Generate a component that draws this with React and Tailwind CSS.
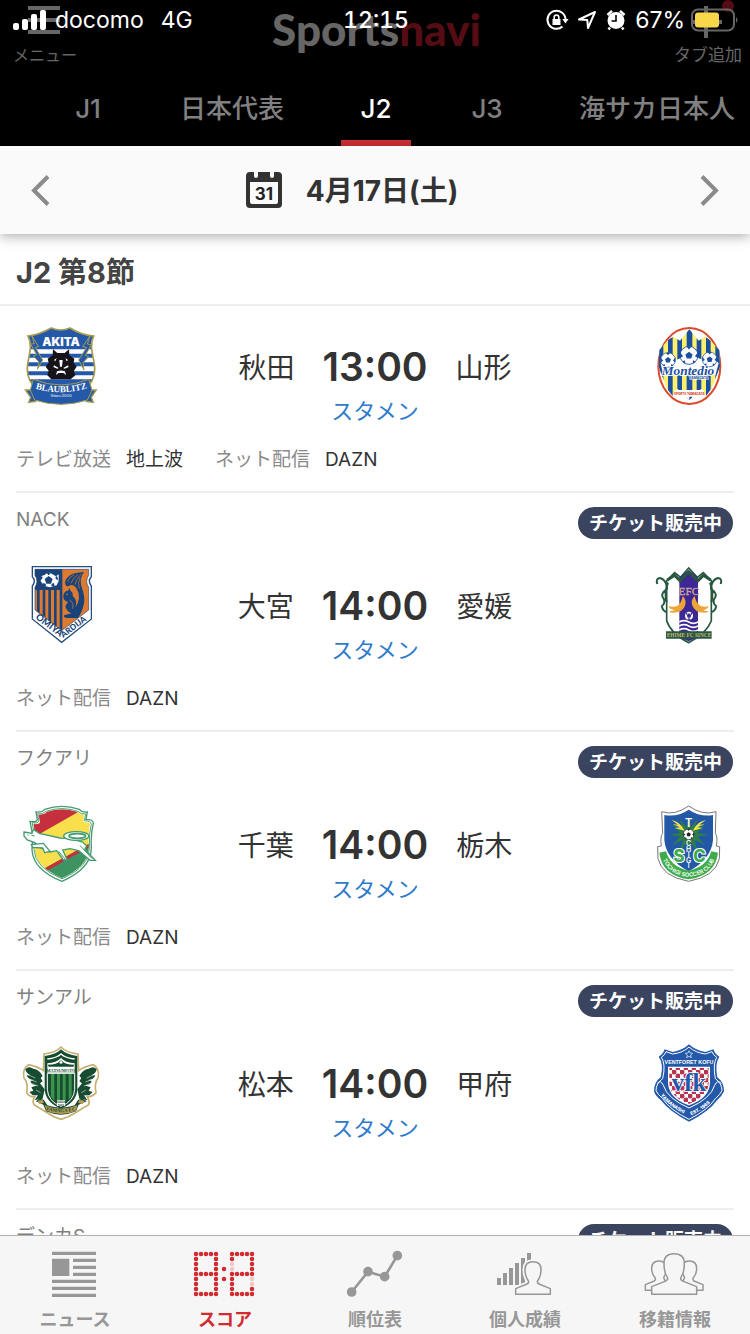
import React from 'react';

const sans = "font-['Inter','Noto_Sans_CJK_JP',sans-serif]";

/* ---------- club crests ---------- */

function Crest({ box, label, children }) {
  return (
    <svg viewBox={box} role="img" aria-label={label} className="size-20 shrink-0">
      {children}
    </svg>
  );
}

function Akita() {
  const shield = 'M84 78 C108 76 132 66 154 54 Q182 66 210 54 C232 68 256 76 281 78 C264 110 286 150 284 180 C284 226 236 262 183 282 C130 262 82 226 82 180 C80 150 102 110 84 78Z';
  return (
    <Crest box="63 48 240 240" label="ブラウブリッツ秋田">
      <defs><clipPath id="akita-c"><path d={shield} /></clipPath></defs>
      <path d={shield} fill="#fff" />
      <g clipPath="url(#akita-c)" fill="#2459a9">
        <path d="M70 48H296V118H70zM70 131H296V143H70zM70 157H296V169H70zM70 184H296V196H70zM70 208H296V290H70z" />
      </g>
      <path d={shield} fill="none" stroke="#a69c50" strokeWidth="5" />
      <path d="M95 76 116 110 106 112 128 150 112 178 117 156 100 138 110 134 92 102 103 101Z M271 76 248 110 260 112 236 150 252 180 249 158 266 140 256 136 274 104 262 102Z" fill="#2459a9" stroke="#a69c50" strokeWidth="3" />
      <text x="183" y="107" textAnchor="middle" fontSize="35" fontWeight="900" fill="#fff" fontFamily="Inter, sans-serif">AKITA</text>
      <path d="M159 118 172 129 194 129 207 118 208 136 223 146 221 158 230 170 222 182 226 196 212 208 H154 L142 196 146 182 137 170 146 158 143 146 158 136Z" fill="#17131a" />
      <path d="M178 150h10l-2 20h-6zM162 166l14 8-4 2-12-5zM204 166l-14 8 4 2 12-5zM171 184q12-5 24 0l3 11-8-6h-14l-8 6zM162 150l8-6-4 10zM204 150l-8-6 4 10z" fill="#fff" />
      <path d="M76 240 98 240 108 274 86 277 92 262Z M289 240 268 240 258 274 280 277 274 262Z" fill="#2459a9" stroke="#a69c50" strokeWidth="4" />
      <path d="M100 208 Q183 242 266 208 L276 240 262 270 Q183 296 104 270 L91 240Z" fill="#2459a9" stroke="#a69c50" strokeWidth="3" />
      <path id="akita-t" d="M98 234 Q183 260 270 232" fill="none" />
      <text fontSize="27" fontWeight="700" fill="#fff" fontFamily="'Liberation Serif', serif">
        <textPath href="#akita-t" startOffset="50%" textAnchor="middle">BLAUBLITZ</textPath>
      </text>
      <text x="183" y="262" textAnchor="middle" fontSize="15" fill="#fff" fontFamily="'Liberation Serif', serif">Since2010</text>
    </Crest>
  );
}

function MiniBall({ x, y, r, fill }) {
  return (
    <g transform={`translate(${x} ${y}) scale(${r / 20})`}>
      <circle r="20" fill="#fff" stroke={fill} strokeWidth="2" />
      <path d="M0-8 8-2 5 7-5 7-8-2ZM-6-20 6-20 0-13ZM20-7 20 6 13 2ZM-20-7-20 6-13 2ZM8 19 15 14 9 11ZM-8 19-15 14-9 11Z" fill={fill} />
    </g>
  );
}

function Yamagata() {
  return (
    <Crest box="27 48 240 240" label="モンテディオ山形">
      <defs><clipPath id="yama-c"><path d="M148 58 176 92 196 80 212 92 238 120 240 170 215 235 198 258 184 236 148 270 112 236 98 258 80 235 56 170 58 120 84 90 100 80 120 92Z" /></clipPath></defs>
      <ellipse cx="148" cy="168" rx="93" ry="114" fill="#fff" stroke="#db4a2c" strokeWidth="6" />
      <g clipPath="url(#yama-c)">
        <path d="M50 50H245V280H50z" fill="#fdf06d" />
        <path d="M56 50h14v230H56zM84 50h14v230H84zM112 50h14v230h-14zM140 50h17v230h-17zM170 50h14v230h-14zM198 50h14v230h-14zM226 50h14v230h-14z" fill="#1c4fa0" />
      </g>
      <path d="M62 160 Q80 130 100 152 L122 145 Q148 100 176 145 L194 150 Q214 130 236 160 L226 196 70 196Z" fill="#fff" />
      <MiniBall x={84} y={150} r={22} fill="#1c4fa0" />
      <MiniBall x={209} y={148} r={22} fill="#1c4fa0" />
      <MiniBall x={147} y={136} r={27} fill="#1c4fa0" />
      <text x="144" y="194" textAnchor="middle" fontSize="40" fontWeight="700" fontStyle="italic" fill="#1c4fa0" stroke="#fff" strokeWidth="5" paintOrder="stroke" fontFamily="'Liberation Serif', serif">Montedio</text>
      <text x="176" y="208" textAnchor="middle" fontSize="10" fontWeight="700" fill="#1c4fa0" stroke="#fff" strokeWidth="3" paintOrder="stroke" fontFamily="Inter, sans-serif">YAMAGATA</text>
      <path d="M104 240H192V260H148L148 270 138 260H104z" fill="#fff" />
      <text x="148" y="255" textAnchor="middle" fontSize="9" fontWeight="800" fill="#db4a2c" fontFamily="Inter, sans-serif">SPORTS YAMAGATA</text>
    </Crest>
  );
}

function Omiya() {
  const shield = 'M67 50H244V80Q232 92 244 108V207L155 277 67 207V108Q79 92 67 80Z';
  return (
    <Crest box="33 45 240 240" label="大宮アルディージャ">
      <path d={shield} fill="#fff" stroke="#254d80" strokeWidth="4" />
      <path d="M75 58H236V76Q224 94 236 112V180L155 242 75 180V112Q87 94 75 76Z" fill="#dd7a32" stroke="#254d80" strokeWidth="2" />
      <path d="M75 58H155V120H75V112Q87 94 75 76Z" fill="#1a4479" />
      <path d="M81 120h8v70l-8-6zM98 120h8v82l-8-6zM115 120h8v96l-8-6zM132 120h8v109l-8-6zM149 58h8v182l-8-5z" fill="#1a4479" />
      <path d="M116 66l22 13 8-6 0 20-6 13-20 6-16-4-12-14 2-16 8-2z" fill="#fff" />
      <path d="M116 78l12 9-5 14h-14l-5-14zM116 65l6 5-6 6-6-6zM141 78l4 12-7-2-2-7zM92 78l-3 12 7-2 2-7zM98 110l10-2-1-7-7-2zM134 110l-10-2 1-7 7-2z" fill="#1a4479" />
      <path d="M165 96 Q172 72 202 68 L222 66 Q208 84 214 108 Q226 140 222 160 Q218 184 204 204 L172 204 Q160 204 162 196 L184 190 Q168 184 166 168 L174 156 Q158 152 160 138 Q160 124 174 122 L178 114 182 123 Q190 128 188 138 Q204 150 196 172 Q216 142 200 116 Q190 100 176 108 Q166 112 165 96Z" fill="#1a4479" />
      <path d="M172 96Q178 80 192 74M183 100Q188 84 204 74M195 104Q196 88 214 72M208 116Q202 98 210 82" fill="none" stroke="#dd7a32" strokeWidth="2" />
      <path d="M178 150Q192 156 188 176" fill="none" stroke="#dd7a32" strokeWidth="2" />
      <circle cx="171" cy="133" r="2.5" fill="#dd7a32" />
      <path d="M70 180 155 244 241 180V206L155 273 70 206Z" fill="#fff" />
      <path id="omiya-a" d="M75 205 156 265" fill="none" />
      <path id="omiya-b" d="M160 264 242 202" fill="none" />
      <g fontSize="28" fontWeight="900" fill="#1a4479" fontFamily="Lato, sans-serif">
        <text><textPath href="#omiya-a">OMIYA</textPath></text>
        <text fontSize="25"><textPath href="#omiya-b">ARDIJA</textPath></text>
      </g>
    </Crest>
  );
}

function Ehime() {
  return (
    <Crest box="27 45 240 240" label="愛媛FC">
      <path d="M80 92 104 68 122 82 146 54 172 82 190 68 214 92V212Q200 250 146 278 92 250 80 212Z" fill="#fff" stroke="#27583f" strokeWidth="5" />
      <path d="M118 82 146 60 174 82V262L146 274 118 262Z" fill="#3c2794" />
      <path d="M82 90 104 76 120 92 146 66 174 92 190 76 212 90" fill="none" stroke="#27583f" strokeWidth="9" />
      <text x="147" y="136" textAnchor="middle" fontSize="34" fill="#c9a3a0" stroke="#c9a3a0" strokeWidth="1" fontFamily="'Liberation Serif', serif">EFC</text>
      <path d="M128 138Q140 150 136 164Q130 188 98 188Q90 190 88 182Q96 184 104 180Q88 178 86 168Q98 172 112 168Q124 160 128 138ZM164 138Q152 150 156 164Q164 188 192 188Q202 190 206 182Q196 184 190 180Q202 178 206 168Q196 172 182 168Q168 160 164 138Z" fill="#eda438" />
      <circle cx="147" cy="197" r="12" fill="#fff" />
      <path d="M147 190l7 5-3 8h-8l-3-8zM137 190l3-3 3 2-4 6zM157 190l-3-3-3 2 4 6zM143 209h8l-2-4h-4z" fill="#3c2794" />
      <path d="M118 216q14-8 28 0t28 0M118 228q14-8 28 0t28 0M118 240q14-8 28 0t28 0" fill="none" stroke="#fff" strokeWidth="5" />
      <path d="M52 102Q46 86 60 84Q76 88 80 108Q84 120 74 122Q60 134 72 148Q76 160 66 168Q66 180 78 186M242 102Q248 86 234 84Q218 88 214 108Q210 120 220 122Q234 134 222 148Q218 160 228 168Q228 180 216 186M84 98Q72 130 80 156M210 98Q222 130 214 156" fill="none" stroke="#27583f" strokeWidth="6" />
      <path d="M78 244H215V266H78z" fill="#27583f" />
      <text x="147" y="260" textAnchor="middle" fontSize="16" fontWeight="700" fill="#c9b37b" fontFamily="'Liberation Serif', serif">EHIME FC SINCE</text>
    </Crest>
  );
}

function Chiba() {
  const shield = 'M78 66Q96 68 104 58Q156 40 208 58Q216 68 232 66L228 88Q250 88 250 100Q242 130 244 170Q246 236 156 274Q70 240 66 180Q70 130 60 94Q80 98 82 88Z';
  return (
    <Crest box="33 42 240 240" label="ジェフユナイテッド千葉">
      <defs><clipPath id="chiba-c"><path d="M86 74Q104 74 110 66Q156 50 202 66Q210 74 222 74L220 96Q238 96 240 102Q234 130 236 174Q234 230 156 264Q80 232 74 180Q78 130 70 102Q90 104 90 96Z" /></clipPath></defs>
      <path d={shield} fill="#fff" stroke="#459b70" strokeWidth="4" />
      <g clipPath="url(#chiba-c)">
        <path d="M50 40H260V280H50z" fill="#f9df4c" />
        <path d="M50 40H250L50 154Z" fill="#c52f3e" />
        <path d="M80 248 250 154V290H80Z" fill="#3d9362" />
        <path d="M84 246 250 154V165L100 248Z" fill="#c52f3e" />
      </g>
      <path d={shield} fill="none" stroke="#459b70" strokeWidth="3" transform="translate(10 10) scale(.935)" />
      <path d="M42 126 66 130 70 118 88 130 150 144 182 146 218 156 230 168 224 178 256 211H240L206 182 180 176 158 180 172 210H160L140 182 120 186 90 172 74 158 52 150 42 138Z" fill="#fff" stroke="#459b70" strokeWidth="4" />
      <path d="M64 164 100 160 120 184 104 188 98 174 68 172Z" fill="#fff" stroke="#459b70" strokeWidth="4" />
      <ellipse cx="199" cy="138" rx="38" ry="13" fill="#fff" stroke="#459b70" strokeWidth="4" />
      <ellipse cx="202" cy="138" rx="25" ry="7" fill="#fff" stroke="#459b70" strokeWidth="5" />
      <path d="M64 136l10 2M52 134l4 2M210 166l36 40M146 184l20 24" stroke="#459b70" strokeWidth="3" />
    </Crest>
  );
}

function Matsumoto() {
  const outline = 'M153 51Q168 68 204 72L206 122Q222 110 250 104Q270 114 264 144Q252 160 258 188Q246 202 232 200Q240 212 236 224Q214 236 200 246Q176 262 153 268Q130 262 108 246Q92 236 72 224Q66 212 74 200Q60 202 50 188Q56 160 42 144Q36 114 56 104Q84 110 100 122L102 72Q138 68 153 51Z';
  return (
    <Crest box="33 39 240 240" label="松本山雅FC">
      <path d={outline} fill="#fff" stroke="#c6b06f" strokeWidth="5" />
      <path d="M153 58Q168 74 202 78V180Q198 218 153 236Q108 218 104 180V78Q138 74 153 58Z" fill="#174c30" />
      <path d="M112 100Q140 98 153 84Q166 98 194 100V128H112Z" fill="#fff" />
      <path d="M112 87Q140 84 153 72Q166 84 194 87" fill="none" stroke="#fff" strokeWidth="4" />
      <path d="M113 104Q142 104 150 92H156Q164 104 193 104L190 110H116Z" fill="#174c30" />
      <circle cx="153" cy="97" r="5" fill="#fff" stroke="#174c30" />
      <text x="153" y="126" textAnchor="middle" fontSize="13" fontWeight="700" fill="#174c30" fontFamily="'Liberation Serif', serif">MATSUMOTO</text>
      <path d="M112 130H194V178Q192 214 153 229Q114 214 112 178Z" fill="#174c30" stroke="#fff" strokeWidth="3" />
      <path d="M123 132h10v80l-10-12zM141 132h9v90l-9-4zM158 132h9v82l-9 6zM176 132h9v66l-9 12z" fill="#3b934c" />
      <path d="M141 211H165V228H141z" fill="#fff" />
      <text x="153" y="219" textAnchor="middle" fontSize="8" fontWeight="700" fill="#174c30" fontFamily="Inter, sans-serif">SINCE</text>
      <text x="153" y="227" textAnchor="middle" fontSize="8" fontWeight="700" fill="#174c30" fontFamily="Inter, sans-serif">1965</text>
      <path id="matsu-w" d="M46 118Q56 106 70 116Q88 118 98 138L92 144 98 154 90 160 104 178 98 206 74 210 84 196 68 196 58 186 70 182 64 172 82 166Q60 164 62 152L74 150Q54 150 50 136L62 136Q48 130 46 118Z" fill="#174c30" />
      <use href="#matsu-w" transform="translate(306 0) scale(-1 1)" />
      <path d="M64 160 84 168M58 148 80 156M54 134 76 144M78 180 92 188M242 160 222 168M248 148 226 156M252 134 230 144M228 180 214 188" stroke="#fff" strokeWidth="1.5" />
      <path d="M78 214 Q86 202 102 210 L112 226 Q153 240 194 226 L204 210 Q220 202 230 214 L206 224 198 244 Q153 264 108 244 L100 224Z" fill="#174c30" />
      <path d="M82 212l16-2 4 8-14 4zM224 212l-16-2-4 8 14 4zM104 226Q153 246 202 226L198 242Q153 262 110 242Z" fill="#b89c57" />
      <path id="matsu-t" d="M106 238 Q153 256 202 238" fill="none" />
      <text fontSize="15" fontWeight="700" fill="#174c30" fontFamily="'Liberation Serif', serif">
        <textPath href="#matsu-t" startOffset="50%" textAnchor="middle">YAMAGA F.C.</textPath>
      </text>
    </Crest>
  );
}

function Tochigi() {
  return (
    <Crest box="27 42 240 240" label="栃木SC">
      <path d="M65 65Q104 78 146 48Q188 78 228 65L226 130Q234 140 229 168L239 170 238 206Q226 260 146 274Q66 260 54 206L53 170 64 168Q60 140 68 130Z" fill="#fff" stroke="#777" strokeWidth="3" />
      <path d="M73 75Q112 82 146 59Q182 82 219 75V150Q214 208 146 244Q78 208 73 150Z" fill="#2358a6" />
      <path d="M146 78 153 112 172 88 164 118 196 104 172 128 206 134 172 140 196 166 164 150 172 184 152 156 146 190 140 156 120 184 128 150 96 166 120 140 88 134 120 128 96 104 128 118 120 88 139 112Z" fill="#2f7d49" />
      <path d="M94 90Q120 94 134 122L104 114 120 112 98 103 114 104ZM198 90Q172 94 158 122L188 114 172 112 194 103 178 104Z" fill="#f1e54c" />
      <MiniBall x={146} y={133} r={16} fill="#222" />
      <g fill="#fff" textAnchor="middle" fontFamily="Inter, sans-serif" fontWeight="600">
        <text x="146" y="112" fontSize="34">T</text>
        <text x="146" y="168" fontSize="21">C</text>
        <text x="146" y="185" fontSize="21">H</text>
        <text x="146" y="202" fontSize="21">I</text>
        <text x="146" y="219" fontSize="21">G</text>
        <text x="146" y="235" fontSize="19">I</text>
      </g>
      <g fill="#3dab4a" stroke="#fff" strokeWidth="6" paintOrder="stroke" textAnchor="middle" fontFamily="Inter, sans-serif" fontWeight="800" fontSize="50">
        <text x="117" y="215">S</text>
        <text x="178" y="215">C</text>
      </g>
      <path d="M58 188 78 184Q92 232 146 242Q200 232 214 184L234 188Q226 256 146 268Q66 256 58 188Z" fill="#3dab4a" />
      <path id="tochi-t" d="M66 204Q88 258 146 260Q204 258 226 204" fill="none" />
      <text fontSize="17" fontWeight="600" fill="#fff" fontFamily="Inter, sans-serif">
        <textPath href="#tochi-t" startOffset="50%" textAnchor="middle">TOCHIGI SOCCER CLUB</textPath>
      </text>
    </Crest>
  );
}

function Kofu() {
  const outline = 'M147 763Q164 780 196 786L220 778Q226 794 238 800Q224 822 232 862Q252 876 252 904Q246 918 232 930Q206 966 147 995Q90 966 62 930Q46 918 42 904Q42 876 62 862Q72 822 56 800Q68 794 74 778L98 786Q130 780 147 763Z';
  return (
    <Crest box="27 759 240 240" label="ヴァンフォーレ甲府">
      <defs>
        <pattern id="kofu-p" width="24" height="24" patternUnits="userSpaceOnUse">
          <path d="M0 0H24V24H0z" fill="#fff" />
          <circle cx="6" cy="6" r="7.500" fill="#b73350" />
          <circle cx="18" cy="18" r="7.500" fill="#b73350" />
        </pattern>
      </defs>
      <path d={outline} fill="#2459a9" />
      <path d="M147 771Q166 788 196 792L216 785Q220 796 230 802Q218 822 226 866Q246 880 246 902Q240 914 226 926Q204 960 147 988Q90 960 68 926Q54 914 48 902Q48 880 68 866Q78 822 64 802Q74 796 78 785L98 792Q130 788 147 771Z" fill="none" stroke="#fff" strokeWidth="3" />
      <path d="M86 832H208V876Q208 922 147 944Q86 922 86 876Z" fill="url(#kofu-p)" stroke="#fff" strokeWidth="4" />
      <path d="M147 782l3 7 8 1-6 5 2 8-7-4-7 4 2-8-6-5 8-1z" fill="none" stroke="#fff" strokeWidth="2" />
      <text x="147" y="823" textAnchor="middle" fontSize="16" fontWeight="800" fill="#fff" fontFamily="'Liberation Sans Narrow', 'Liberation Sans', sans-serif">VENTFORET KOFU</text>
      <text x="147" y="904" textAnchor="middle" fontSize="74" fontWeight="700" fill="#2459a9" stroke="#fff" strokeWidth="5" paintOrder="stroke" fontFamily="'Liberation Serif', serif">vfk</text>
      <path d="M52 880Q62 868 70 886Q82 926 147 954Q212 926 224 886Q232 868 244 880" fill="none" stroke="#fff" strokeWidth="3" />
      <path id="kofu-a" d="M62 916Q88 952 142 976" fill="none" />
      <path id="kofu-b" d="M154 976Q206 952 234 914" fill="none" />
      <g fontSize="14" fontWeight="800" fill="#fff" fontFamily="Inter, sans-serif">
        <text><textPath href="#kofu-a">YAMANASHI</textPath></text>
        <text><textPath href="#kofu-b">EST. 1965</textPath></text>
      </g>
    </Crest>
  );
}

/* ---------- tab bar icons ---------- */

function NavSvg({ box, children }) {
  return (
    <svg viewBox={box} aria-hidden="true" className="h-[50px] w-20">
      {children}
    </svg>
  );
}

function NewsIcon() {
  return (
    <NavSvg box="105 150 240 150">
      <path d="M156 155H288V165H156zM156 176H208V228H156zM219 176H288V186H219zM219 197H288V207H219zM219 218H288V228H219zM156 239H288V249H156zM156 260H288V270H156zM156 281H288V291H156z" fill="#979797" />
    </NavSvg>
  );
}

function digitDots(x0) {
  const dots = [];
  for (let r = 0; r < 9; r++) {
    for (let c = 0; c < 5; c++) {
      if (c === 0 || c === 4 || r % 4 === 0) dots.push([x0 + c * 15, 162 + r * 15]);
    }
  }
  return dots;
}

const faintDots = ['696,192', '696,207', '756,237', '756,252'];

function ScoreIcon() {
  const dots = [...digitDots(588), ...digitDots(696), [672, 207], [672, 237]];
  return (
    <NavSvg box="555 150 240 150">
      {dots.map(([x, y]) => (
        <circle key={`${x},${y}`} cx={x} cy={y} r="6.8" fill={faintDots.includes(`${x},${y}`) ? '#efc6ca' : '#d22b2f'} />
      ))}
    </NavSvg>
  );
}

function RankIcon() {
  return (
    <NavSvg box="1005 150 240 150">
      <path d="M1055 276 1104 215 1154 230 1192 167" fill="none" stroke="#979797" strokeWidth="8" />
      <g fill="#979797">
        <circle cx="1055" cy="276" r="14.5" />
        <circle cx="1104" cy="215" r="14.5" />
        <circle cx="1154" cy="230" r="14.5" />
        <circle cx="1192" cy="167" r="14.5" />
      </g>
    </NavSvg>
  );
}

function PlayerIcon() {
  const person = 'M422 283V266L456 252Q463 249 460 242C452 232 450 220 450 208C450 190 460 185 474 185C488 185 498 190 498 208C498 222 495 233 488 242Q485 249 492 252L526 266V283Z';
  return (
    <NavSvg box="330 150 240 150">
      <path d="M366 234h12v21h-12zM384 219h12v36h-12zM402 204h12v51h-12zM420 189h12v66h-12zM438 174h12v81h-12zM456 159h12v96h-12z" fill="#979797" />
      <path d={person} fill="#f6f6f6" stroke="#f6f6f6" strokeWidth="15" />
      <path d={person} fill="#f6f6f6" stroke="#979797" strokeWidth="4.5" strokeLinejoin="round" />
    </NavSvg>
  );
}

function TransferIcon() {
  const side = 'M811 271V254L838 243Q844 238 839 232C832 224 830 214 830 205C830 190 838 183 852 183C868 183 874 190 874 205C874 214 872 224 866 232L880 271Z';
  return (
    <NavSvg box="780 150 240 150">
      <g fill="#f6f6f6" stroke="#979797" strokeWidth="4.5" strokeLinejoin="round">
        <path d={side} />
        <path d={side} transform="translate(1795 0) scale(-1 1)" />
        <path d="M830 283V260L870 244Q882 239 876 230C869 220 867 206 867 190C867 168 879 161 897 161C916 161 928 168 928 190C928 206 926 220 919 230Q913 239 925 244L965 260V283Z" />
      </g>
    </NavSvg>
  );
}

/* ---------- header ---------- */

function StatusBar() {
  return (
    <div className="absolute inset-x-0 top-0 grid h-10 grid-cols-3 items-center pr-[11px] pl-[13px] text-[23px] leading-10 text-white">
      <div className="flex items-center gap-[9px]">
        <svg viewBox="0 0 33 22" aria-hidden="true" className="h-[22px] w-[33px]" fill="#fff">
          <rect x="0" y="14" width="6" height="7" rx="2" />
          <rect x="9" y="10" width="6" height="11" rx="2" />
          <rect x="18" y="5" width="6" height="16" rx="2" />
          <rect x="27" y="1" width="6" height="20" rx="2" />
        </svg>
        <span>docomo</span>
        <span className="pl-2">4G</span>
      </div>
      <div className="text-center font-medium tabular-nums">12:15</div>
      <div className="flex items-center justify-end">
        <svg viewBox="0 0 24 24" aria-hidden="true" className="mr-[8px] size-6 shrink-0" fill="none" stroke="#fff" strokeWidth="2">
          <path d="M17.500 18.500A9 9 0 1 1 20.500 12" />
          <path d="M17.400 11h6.200l-3.100 4.500z" fill="#fff" stroke="none" />
          <path d="M7.500 11h8v6h-8z" fill="#fff" stroke="none" />
          <path d="M9.200 11.500V9.300a2.300 2.300 0 0 1 4.600 0v2.200" strokeWidth="1.600" />
        </svg>
        <svg viewBox="0 0 20 20" aria-hidden="true" className="mr-[9px] size-5 shrink-0" fill="none" stroke="#fff" strokeWidth="2" strokeLinejoin="round">
          <path d="M18 2 11 18 10.300 10 2 9.500Z" />
        </svg>
        <svg viewBox="0 0 20 22" aria-hidden="true" className="mr-[9px] h-[22px] w-5 shrink-0">
          <circle cx="10" cy="11.500" r="8.500" fill="#fff" />
          <path d="M1.500 6 6 1.800M18.500 6 14 1.800M4 18.500 2.500 20.500M16 18.500 17.500 20.500" stroke="#fff" strokeWidth="2.500" />
          <path d="M10 6v6H5.500" fill="none" stroke="#000" strokeWidth="1.600" />
        </svg>
        <span>67%</span>
        <svg viewBox="0 0 48 24" aria-label="バッテリー 67%" className="ml-[6px] h-6 w-12 shrink-0">
          <rect x="1" y="1.500" width="42" height="21" rx="6" fill="none" stroke="#666" strokeWidth="2" />
          <rect x="4" y="4.500" width="24" height="15" rx="3" fill="#f8d84a" />
          <path d="M45 9q3 3 0 6z" fill="#666" />
        </svg>
      </div>
    </div>
  );
}

function AppHeader() {
  return (
    <div className="flex h-[72px] items-start justify-between pr-[8px] pl-[11px] text-[#666]">
      <button type="button" className="flex w-[68px] flex-col text-[16px] leading-6">
        <svg viewBox="0 0 32 43" aria-hidden="true" className="ml-[17px] h-[43px] w-8" fill="#666">
          <path d="M0 6h32v4H0zM0 18h32v4H0zM0 30h32v4H0z" />
        </svg>
        <span>メニュー</span>
      </button>
      <div className="pt-[5px] font-['Lato','Inter',sans-serif] text-[44px] leading-[48px] font-black">
        Sports<span className="text-[#560c14]">navi</span>
      </div>
      <button type="button" className="flex w-[68px] flex-col text-[17px] leading-6">
        <svg viewBox="0 0 54 43" aria-hidden="true" className="ml-[14px] h-[43px] w-[54px]">
          <path d="M16 6h4v32h-4zM3 20h31v4H3z" fill="#666" />
          <circle cx="40" cy="6" r="6" fill="#560c14" />
        </svg>
        <span>タブ追加</span>
      </button>
    </div>
  );
}

const tabs = ['J1', '日本代表', 'J2', 'J3', '海サカ日本人'];

function Tabs() {
  return (
    <nav aria-label="カテゴリ" className="flex gap-[37px] overflow-hidden pl-[51px] text-[26px] leading-[74px] font-medium">
      {tabs.map((t) => (
        <a
          key={t}
          href="#"
          aria-current={t === 'J2' ? 'page' : undefined}
          className={
            t === 'J2'
              ? 'relative h-[74px] min-w-[74px] shrink-0 px-[18px] text-center text-white after:absolute after:inset-x-[2px] after:bottom-0 after:h-[6px] after:bg-[#d22f2f]'
              : 'h-[74px] min-w-[74px] shrink-0 px-[18px] text-center text-[#808080]'
          }
        >
          {t}
        </a>
      ))}
    </nav>
  );
}

function DateBar() {
  return (
    <div className="relative z-10 flex h-[88px] shrink-0 items-center justify-between bg-[#fafafa] px-[30px] shadow-[0_2px_12px_rgba(0,0,0,0.35)]">
      <button type="button" aria-label="前の日">
        <svg viewBox="0 0 20 32" className="h-8 w-5" fill="none" stroke="#8a8a8a" strokeWidth="4"><path d="M18 2.500 4 16.500 18 30.500" /></svg>
      </button>
      <button type="button" className="flex items-center gap-6 pr-[46px] text-[28px] leading-9 font-bold text-[#333]">
        <svg viewBox="0 0 36 36" aria-hidden="true" className="size-9">
          <path d="M4 0H8V4a2 2 0 0 0 4 0V0H24V4a2 2 0 0 0 4 0V0h4a4 4 0 0 1 4 4V32a4 4 0 0 1-4 4H4a4 4 0 0 1-4-4V4a4 4 0 0 1 4-4ZM4 10V30a2 2 0 0 0 2 2H30a2 2 0 0 0 2-2V10Z" fill="#333" fillRule="evenodd" />
          <text x="18" y="27.500" textAnchor="middle" fontSize="17" fontWeight="700" fill="#222" fontFamily="Inter, sans-serif">31</text>
        </svg>
        <span className="pt-[2px]">4月17日(土)</span>
      </button>
      <button type="button" aria-label="次の日">
        <svg viewBox="0 0 20 32" className="h-8 w-5" fill="none" stroke="#8a8a8a" strokeWidth="4"><path d="M2 2.500 16 16.500 2 30.500" /></svg>
      </button>
    </div>
  );
}

/* ---------- matches ---------- */

const matches = [
  { home: '秋田', away: '山形', time: '13:00', HomeCrest: Akita, AwayCrest: Yamagata, media: [['テレビ放送', '地上波'], ['ネット配信', 'DAZN']] },
  { venue: 'NACK', home: '大宮', away: '愛媛', time: '14:00', HomeCrest: Omiya, AwayCrest: Ehime, media: [['ネット配信', 'DAZN']] },
  { venue: 'フクアリ', home: '千葉', away: '栃木', time: '14:00', HomeCrest: Chiba, AwayCrest: Tochigi, media: [['ネット配信', 'DAZN']] },
  { venue: 'サンアル', home: '松本', away: '甲府', time: '14:00', HomeCrest: Matsumoto, AwayCrest: Kofu, media: [['ネット配信', 'DAZN']] },
];

function VenueRow({ venue }) {
  return (
    <div className="flex h-[52px] items-start justify-between pt-[14px]">
      <span className="text-[19px] leading-[26px] text-[#808080]">{venue}</span>
      <a href="#" className="mr-px rounded-full bg-[#3a445f] px-[11px] pt-px text-[19px] leading-[31px] font-bold text-white">チケット販売中</a>
    </div>
  );
}

function Match({ venue, home, away, time, HomeCrest, AwayCrest, media }) {
  return (
    <li className="border-b-2 border-[#eee]">
      {venue && <VenueRow venue={venue} />}
      <div className="flex items-start justify-between px-[5px] pt-5">
        <HomeCrest />
        <div className="flex flex-col items-center">
          <div className="flex h-20 items-center gap-7 pt-[3px] text-[28px] text-[#333]">
            <span>{home}</span>
            <span className="text-[39px] font-semibold">{time}</span>
            <span>{away}</span>
          </div>
          <a href="#" className="-mt-2 text-[22px] leading-[26px] text-[#2f7bcb]">スタメン</a>
        </div>
        <AwayCrest />
      </div>
      <dl className="flex gap-8 pt-[24px] pb-[19px] text-[19px] leading-6">
        {media.map(([k, v]) => (
          <div key={k} className="flex gap-[15px]">
            <dt className="text-[#8a8a8a]">{k}</dt>
            <dd className="text-[#333]">{v}</dd>
          </div>
        ))}
      </dl>
    </li>
  );
}

const navItems = [
  ['ニュース', NewsIcon],
  ['スコア', ScoreIcon],
  ['順位表', RankIcon],
  ['個人成績', PlayerIcon],
  ['移籍情報', TransferIcon],
];

export default function App() {
  return (
    <div lang="ja" className={`${sans} flex h-screen flex-col bg-white`}>
      <header className="relative shrink-0 bg-black">
        <AppHeader />
        <StatusBar />
        <Tabs />
      </header>
      <DateBar />
      <main className="min-h-0 flex-1 overflow-y-auto [scrollbar-width:none]">
        <h1 className="border-b-2 border-[#eee] px-4 pt-[7px] text-[29px] leading-[63px] font-bold text-[#444]">J2 第8節</h1>
        <ul className="px-4">
          {matches.map((m) => <Match key={m.home} {...m} />)}
          <li><VenueRow venue="デンカS" /></li>
        </ul>
      </main>
      <nav aria-label="メイン" className="grid shrink-0 grid-cols-5 border-t border-[#b2b2b2] bg-[#f6f6f6] pt-[14px]">
        {navItems.map(([label, Icon]) => (
          <a key={label} href="#" className="flex flex-col items-center">
            <Icon />
            <span className={label === 'スコア' ? 'mt-[6px] text-[18px] leading-[28px] font-bold text-[#d22b2f]' : 'mt-[6px] text-[18px] leading-[28px] font-bold text-[#979797]'}>{label}</span>
          </a>
        ))}
      </nav>
    </div>
  );
}
